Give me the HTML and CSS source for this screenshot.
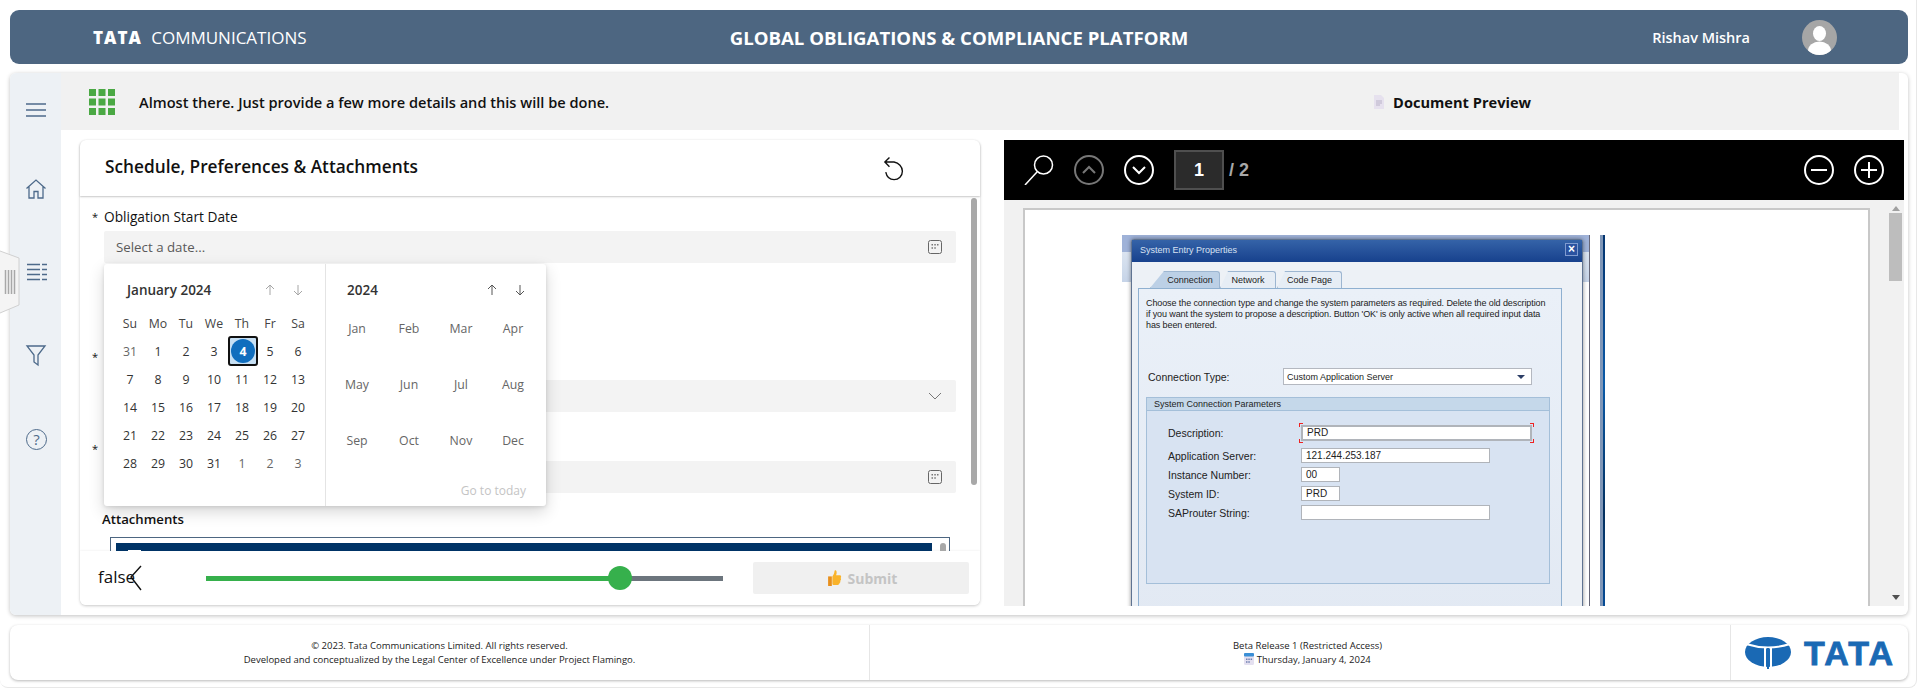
FILE: index.html
```html
<!DOCTYPE html>
<html lang="en">
<head>
    <meta charset="UTF-8">
    <title>Global Obligations &amp; Compliance Platform</title>
    <link rel="stylesheet" href="styles.css">
</head>
<body>
<div class="app">
    <header class="topbar">
        <div class="brand"><b>TATA</b> COMMUNICATIONS</div>
        <div class="app-title">GLOBAL OBLIGATIONS &amp; COMPLIANCE PLATFORM</div>
        <div class="user">
            <span>Rishav Mishra</span>
            <svg class="avatar" viewBox="0 0 35 35"><defs><clipPath id="av"><circle cx="17.5" cy="17.5" r="17.5"/></clipPath></defs><g clip-path="url(#av)"><rect width="35" height="35" fill="#a6a6a6"/><ellipse cx="17.5" cy="13.5" rx="6.5" ry="7.5" fill="#fff"/><ellipse cx="17.5" cy="31" rx="11.5" ry="9.5" fill="#fff"/></g></svg>
        </div>
    </header>

    <main class="main">
        <svg class="handle" viewBox="0 0 20 64"><path class="handle-body" d="M0 1 19 8V55L0 63"/><path class="handle-lines" d="M5.500 20v24M8.500 20v24M11.500 20v24M14.500 20v24"/></svg>
        <nav class="sidebar">
            <svg class="nav-icon menu" viewBox="0 0 24 24"><path d="M2 6h20M2 12h20M2 18h20"/></svg>
            <svg class="nav-icon home" viewBox="0 0 24 24"><path d="M2.5 11.5 12 3l9.5 8.5M5 9.5V21h5v-6.5h4V21h5V9.5"/></svg>
            <svg class="nav-icon list" viewBox="0 0 24 24"><path d="M3 4.500h13M18 4.500h5M3 9.500h13M18 9.500h5M3 14.500h13M18 14.500h5M3 19.500h13M18 19.500h5"/></svg>
            <svg class="nav-icon filter" viewBox="0 0 24 24"><path d="M3 3h18l-7 9v10l-4-3v-7z"/></svg>
            <span class="help">?</span>
        </nav>

        <div class="content">
            <div class="strip">
                <svg class="dots" viewBox="0 0 26 26"><path d="M0 0h7v7H0zM9.500 0h7v7h-7zM19 0h7v7h-7zM0 9.500h7v7H0zM9.500 9.500h7v7h-7zM19 9.500h7v7h-7zM0 19h7v7H0zM9.500 19h7v7h-7zM19 19h7v7h-7z"/></svg>
                <span class="strip-text">Almost there. Just provide a few more details and this will be done.</span>
                <div class="strip-doc">
                    <svg class="doc-icon" viewBox="0 0 12 14"><path d="M1 0h7l3 3v11H1z" fill="#e6e1ee"/><path d="M3 6h6M3 8h6M3 10h4" stroke="#b9b2c8"/></svg>
                    <span>Document Preview</span>
                </div>
            </div>

            <div class="panels">
                <section class="card">
                    <div class="card-head">
                        <h2>Schedule, Preferences &amp; Attachments</h2>
                        <svg class="reset" viewBox="0 0 26 26"><path d="M7 1 2 6l5 5M2 6h10c5 1 9 5 9 10 0 5-4 9-9 9-5 0-8-3-9-8"/></svg>
                    </div>

                    <div class="card-body">
                        <div class="form">
                            <div class="label-row first"><span class="star">*</span><label>Obligation Start Date</label></div>
                            <div class="input"><span>Select a date...</span>
                                <svg class="cal" viewBox="0 0 14 14"><rect x=".5" y=".5" width="13" height="13" rx="2"/><path class="fill" d="M3.500 4h1.500v1.500H3.500zM6.300 4h1.500v1.500H6.300zM9 4h1.500v1.500H9zM3.500 7.200h1.500v1.500H3.500zM6.300 7.200h1.500v1.500H6.300z"/></svg>
                            </div>

                            <div class="label-row second"><span class="star">*</span></div>
                            <div class="input">
                                <svg class="chev" viewBox="0 0 14 8"><path d="M1 1l6 6 6-6"/></svg>
                            </div>

                            <div class="label-row third"><span class="star">*</span></div>
                            <div class="input">
                                <svg class="cal" viewBox="0 0 14 14"><rect x=".5" y=".5" width="13" height="13" rx="2"/><path class="fill" d="M3.500 4h1.500v1.500H3.500zM6.300 4h1.500v1.500H6.300zM9 4h1.500v1.500H9zM3.500 7.200h1.500v1.500H3.500zM6.300 7.200h1.500v1.500H6.300z"/></svg>
                            </div>

                            <div class="attach-label">Attachments</div>
                            <div class="attach-box">
                                <div class="attach-bar"><i></i></div>
                                <div class="attach-thumb"></div>
                            </div>

                            <div class="picker">
                                <div class="pick-days">
                                    <div class="pick-head">
                                        <span>January 2024</span>
                                        <svg class="arrow off" viewBox="0 0 12 12"><path d="M6 11V1M2 5l4-4 4 4"/></svg>
                                        <svg class="arrow off" viewBox="0 0 12 12"><path d="M6 1v10M2 7l4 4 4-4"/></svg>
                                    </div>
                                    <div class="days">
                                        <span class="wd">Su</span><span class="wd">Mo</span><span class="wd">Tu</span><span class="wd">We</span><span class="wd">Th</span><span class="wd">Fr</span><span class="wd">Sa</span>
                                        <span class="out">31</span><span>1</span><span>2</span><span>3</span><span class="today"><b>4</b></span><span>5</span><span>6</span>
                                        <span>7</span><span>8</span><span>9</span><span>10</span><span>11</span><span>12</span><span>13</span>
                                        <span>14</span><span>15</span><span>16</span><span>17</span><span>18</span><span>19</span><span>20</span>
                                        <span>21</span><span>22</span><span>23</span><span>24</span><span>25</span><span>26</span><span>27</span>
                                        <span>28</span><span>29</span><span>30</span><span>31</span><span class="out">1</span><span class="out">2</span><span class="out">3</span>
                                    </div>
                                </div>
                                <div class="pick-months">
                                    <div class="pick-head">
                                        <span>2024</span>
                                        <svg class="arrow" viewBox="0 0 12 12"><path d="M6 11V1M2 5l4-4 4 4"/></svg>
                                        <svg class="arrow" viewBox="0 0 12 12"><path d="M6 1v10M2 7l4 4 4-4"/></svg>
                                    </div>
                                    <div class="months">
                                        <span>Jan</span><span>Feb</span><span>Mar</span><span>Apr</span>
                                        <span>May</span><span>Jun</span><span>Jul</span><span>Aug</span>
                                        <span>Sep</span><span>Oct</span><span>Nov</span><span>Dec</span>
                                    </div>
                                    <div class="go-today">Go to today</div>
                                </div>
                            </div>
                        </div>
                        <div class="form-scroll"></div>
                    </div>

                    <div class="card-foot">
                        <span class="false-text">false</span>
                        <svg class="back" viewBox="0 0 12 26"><path d="M11 1 1 12l10 13"/></svg>
                        <div class="slider"><div class="slider-fill"></div><div class="slider-thumb"></div></div>
                        <button class="submit" disabled>
                            <svg class="thumb" viewBox="0 0 14 15"><path d="M5 6c1-1 2-3 2-5 0-1 2-1 2 1 0 1 0 2-.5 3H12c1.500 0 1.500 2 .8 2.500.6.8.4 2-.4 2.500.3 1 0 1.800-.7 2.200 0 1-.7 1.800-1.700 1.800H6c-1 0-1-1-1-1z" fill="#f9b32b"/><rect x="1" y="6" width="3.500" height="9" fill="#e88f1c"/></svg>
                            Submit
                        </button>
                    </div>
                </section>

                <section class="viewer">
                    <div class="viewer-bar">
                        <svg class="search" viewBox="0 0 30 30"><circle cx="19.500" cy="10" r="9"/><path d="M13 17 1 30"/></svg>
                        <svg class="round dim" viewBox="0 0 30 30"><circle cx="15" cy="15" r="14"/><path d="M9 18l6-6 6 6"/></svg>
                        <svg class="round" viewBox="0 0 30 30"><circle cx="15" cy="15" r="14"/><path d="M9 12l6 6 6-6"/></svg>
                        <div class="page-box">1</div>
                        <span class="page-total">/ 2</span>
                        <svg class="round zoom-out" viewBox="0 0 30 30"><circle cx="15" cy="15" r="14"/><path d="M7 15h16"/></svg>
                        <svg class="round" viewBox="0 0 30 30"><circle cx="15" cy="15" r="14"/><path d="M15 7v16M7 15h16"/></svg>
                    </div>
                    <div class="viewer-body">
                        <div class="doc-wrap">
                            <div class="doc-page">
                                <div class="shot">
                                    <div class="back-window"></div>
                                    <div class="shot-edge"></div>
                                    <div class="dialog">
                                        <div class="dialog-title"><span>System Entry Properties</span><em>×</em></div>
                                        <div class="tabs"><span class="tab active">Connection</span><span class="tab">Network</span><span class="tab">Code Page</span></div>
                                        <div class="tab-panel">
                                            <p>Choose the connection type and change the system parameters as required. Delete the old description<br>if you want the system to propose a description. Button 'OK' is only active when all required input data<br>has been entered.</p>
                                            <div class="conn-row"><span>Connection Type:</span><div class="sap-select">Custom Application Server<i></i></div></div>
                                            <div class="group">
                                                <div class="group-head">System Connection Parameters</div>
                                                <div class="sap-row desc"><span>Description:</span><div class="sap-input wide marked">PRD</div></div>
                                                <div class="sap-row"><span>Application Server:</span><div class="sap-input mid">121.244.253.187</div></div>
                                                <div class="sap-row"><span>Instance Number:</span><div class="sap-input small">00</div></div>
                                                <div class="sap-row"><span>System ID:</span><div class="sap-input small">PRD</div></div>
                                                <div class="sap-row"><span>SAProuter String:</span><div class="sap-input mid"></div></div>
                                            </div>
                                        </div>
                                    </div>
                                </div>
                            </div>
                        </div>
                        <div class="doc-scroll">
                            <i class="up"></i>
                            <div class="doc-thumb"></div>
                            <i class="down"></i>
                        </div>
                    </div>
                </section>
            </div>
        </div>
    </main>

    <footer class="footer">
        <div class="foot-cell legal">
            <div>© 2023. Tata Communications Limited. All rights reserved.</div>
            <div>Developed and conceptualized by the Legal Center of Excellence under Project Flamingo.</div>
        </div>
        <div class="foot-cell release">
            <div>Beta Release 1 (Restricted Access)</div>
            <div><svg class="mini-cal" viewBox="0 0 10 12"><rect width="10" height="12" rx="1.500" fill="#e4e0f0"/><rect width="10" height="3.500" rx="1" fill="#3b8fd6"/><path d="M2 5.500h1.500v1.500H2zM4.300 5.500h1.500v1.500H4.300zM6.600 5.500h1.500v1.500H6.600zM2 8.200h1.500v1.500H2zM4.300 8.200h1.500v1.500H4.300z" fill="#6f7fb0"/></svg> Thursday, January 4, 2024</div>
        </div>
        <div class="foot-logo">
            <svg class="tata-mark" viewBox="0 0 46 32"><ellipse cx="23" cy="15" rx="23" ry="15" fill="#1a69b4"/><path d="M1 7Q23 14 45 7" fill="none" stroke="#fff" stroke-width="2"/><path d="M20 11v21M26 11v21" stroke="#fff" stroke-width="2"/><path d="M23 11v21" stroke="#1a69b4" stroke-width="2"/></svg>
            <span class="tata-word">TATA</span>
        </div>
    </footer>
</div>
</body>
</html>
```

FILE: styles.css
```css
* {
    box-sizing: border-box;
}
html, body {
    margin: 0;
    height: 689px;
    overflow: hidden;
    background: #fff;
}
body {
    font-family: "Open Sans", "Noto Sans", sans-serif;
    color: #111;
}
.app {
    width: 1917px;
    height: 688px;
    padding: 10px 8px 0 10px;
    border-right: 1px solid #e8e8e8;
    border-bottom: 1px solid #e8e8e8;
    border-bottom-right-radius: 8px;
    border-bottom-left-radius: 8px;
}

/* top bar */
.topbar {
    display: grid;
    grid-template-columns: 1fr auto 1fr;
    align-items: center;
    width: 1898px;
    height: 54px;
    background: #4d6681;
    border-radius: 9px;
    color: #fff;
}
.brand {
    padding-left: 83px;
    font-size: 17px;
    white-space: nowrap;
}
.brand b {
    font-weight: 800;
    letter-spacing: 1px;
    margin-right: 5px;
}
.app-title {
    font-size: 18.6px;
    font-weight: 700;
}
.user {
    display: flex;
    justify-content: flex-end;
    align-items: center;
    padding-right: 71px;
    font-size: 14.5px;
    font-weight: 600;
}
.avatar {
    width: 35px;
    height: 35px;
    margin-left: 52px;
}

/* main card */
.main {
    position: relative;
    display: flex;
    width: 1898px;
    height: 542px;
    margin-top: 9px;
    background: #fff;
    border-radius: 6px;
    box-shadow: 0 1px 4px rgba(0,0,0,0.25);
}
.handle {
    position: absolute;
    left: -10px;
    top: 177px;
    width: 20px;
    height: 64px;
}
.handle-body {
    fill: #f4f4f4;
    stroke: #d0d0d0;
}
.handle-lines {
    fill: none;
    stroke: #a8a8a8;
    stroke-width: 1.5;
}
.sidebar {
    width: 51px;
    flex: none;
    display: flex;
    flex-direction: column;
    align-items: center;
    padding-top: 25px;
    background: #edf1f5;
    border-radius: 6px 0 0 6px;
}
.nav-icon {
    width: 24px;
    height: 24px;
    fill: none;
    stroke: #4d6a8a;
    stroke-width: 1.3;
}
.nav-icon.menu {
    stroke-width: 1.5;
}
.nav-icon.home {
    margin-top: 55px;
}
.nav-icon.list {
    margin-top: 59px;
    stroke-width: 1.5;
}
.nav-icon.filter {
    margin-top: 59px;
}
.help {
    width: 21px;
    height: 21px;
    margin: 62px 0 0 2px;
    border: 1.3px solid #4d6a8a;
    border-radius: 50%;
    color: #4d6a8a;
    font-size: 15px;
    line-height: 18px;
    text-align: center;
}
.content {
    flex: 1;
    min-width: 0;
}

/* grey strip */
.strip {
    display: flex;
    align-items: center;
    width: 1838px;
    height: 57px;
    padding: 0 368px 0 28px;
    background: #f1f1f1;
    font-size: 14.6px;
    font-weight: 600;
}
.dots {
    width: 26px;
    height: 26px;
    fill: #4aa843;
}
.strip-text {
    margin-left: 24px;
}
.strip-doc {
    display: flex;
    align-items: center;
    margin-left: auto;
    font-weight: 700;
}
.doc-icon {
    width: 12px;
    height: 14px;
    margin-right: 8px;
}

/* two panels */
.panels {
    display: flex;
    gap: 24px;
    padding: 10px 0 0 19px;
}
.card {
    width: 900px;
    height: 465px;
    flex: none;
    display: flex;
    flex-direction: column;
    border-radius: 6px;
    box-shadow: 0 1px 3px rgba(0,0,0,0.22);
}
.card-head {
    display: flex;
    align-items: center;
    justify-content: space-between;
    height: 56px;
    flex: none;
    padding: 0 73px 0 25px;
    border-radius: 6px 6px 0 0;
    box-shadow: 0 1px 2px rgba(0,0,0,0.22);
}
.card-head h2 {
    margin: 0 0 4px;
    font-size: 17.25px;
    font-weight: 600;
}
.reset {
    width: 24px;
    height: 25px;
    fill: none;
    stroke: #111;
    stroke-width: 1.5;
}
.card-body {
    display: flex;
    flex: 1;
    min-height: 0;
}
.form {
    position: relative;
    width: 888px;
    height: 355px;
    overflow: hidden;
    padding: 10px 0 0 12px;
    font-size: 13.7px;
}
.form-scroll {
    width: 6px;
    height: 287px;
    margin: 2px 0 0 3px;
    background: #a8a8a8;
    border-radius: 3px;
}
.label-row {
    display: flex;
    align-items: center;
    height: 20px;
    font-weight: 500;
}
.label-row.first {
    margin-bottom: 5px;
}
.label-row.second {
    margin-top: 83px;
    margin-bottom: 14px;
}
.label-row.third {
    margin-top: 26px;
    margin-bottom: 3px;
}
.star {
    width: 12px;
    flex: none;
    font-size: 11px;
}
.input {
    display: flex;
    align-items: center;
    justify-content: space-between;
    width: 852px;
    height: 32px;
    margin-left: 12px;
    padding: 0 14px 0 12px;
    background: #f3f3f3;
    border-radius: 2px;
    color: #5a5a5a;
    font-size: 13.3px;
}
.cal {
    width: 14px;
    height: 14px;
    margin-left: auto;
    fill: none;
    stroke: #666;
}
.cal .fill {
    fill: #777;
    stroke: none;
}
.chev {
    width: 14px;
    height: 8px;
    margin-left: auto;
    fill: none;
    stroke: #777;
}
.attach-label {
    margin: 16px 0 0 10px;
    font-weight: 600;
    font-size: 13.2px;
    line-height: 20px;
}
.attach-box {
    display: flex;
    width: 840px;
    height: 40px;
    margin: 8px 0 0 18px;
    padding: 5px 3px 0 5px;
    border: 1px solid #4d6681;
}
.attach-bar {
    width: 818px;
    height: 30px;
    background: #003366;
    padding: 7px 0 0 12px;
}
.attach-bar i {
    display: block;
    width: 13px;
    height: 13px;
    background: #fff;
}
.attach-thumb {
    width: 6px;
    height: 12px;
    margin-left: 8px;
    background: #a8a8a8;
    border-radius: 3px;
}

/* date popup */
.picker {
    position: absolute;
    left: 24px;
    top: 68px;
    display: flex;
    width: 442px;
    height: 242px;
    background: #fff;
    border-radius: 3px;
    box-shadow: 0 6px 16px rgba(0,0,0,0.16), 0 1px 4px rgba(0,0,0,0.12);
    font-size: 12.3px;
    color: #333;
}
.pick-days {
    width: 222px;
    padding: 12px 13px 0 12px;
    border-right: 1px solid #e4e4e4;
}
.pick-months {
    flex: 1;
    padding: 12px 0 0 5px;
}
.pick-head {
    display: flex;
    align-items: center;
    height: 28px;
    padding-left: 11px;
    font-size: 13.5px;
    font-weight: 600;
}
.pick-months .pick-head {
    padding: 0 12px 0 16px;
}
.pick-head span {
    flex: 1;
}
.arrow {
    width: 28px;
    height: 12px;
    fill: none;
    stroke: #555;
    stroke-width: 1;
}
.arrow.off {
    stroke: #a6a6a6;
}
.days {
    display: grid;
    grid-template-columns: repeat(7, 28px);
    grid-auto-rows: 28px;
    margin-top: 5px;
}
.days span {
    display: flex;
    align-items: center;
    justify-content: center;
}
.days .out {
    color: #666;
}
.days .wd {
    color: #444;
}
.days .today {
    position: relative;
    margin: -1px 0 -1px 0;
    width: 30px;
    height: 30px;
    background: #c7e0f4;
    border: 2px solid #111;
    border-radius: 3px;
}
.today b {
    display: flex;
    align-items: center;
    justify-content: center;
    width: 24px;
    height: 24px;
    background: #106ebe;
    border-radius: 50%;
    color: #fff;
    font-weight: 700;
}
.months {
    display: grid;
    grid-template-columns: repeat(4, 52px);
    grid-auto-rows: 56px;
    margin-top: -3px;
    text-align: center;
    line-height: 56px;
    color: #666;
}
.go-today {
    margin-top: 12px;
    padding-right: 20px;
    text-align: right;
    line-height: 20px;
    color: #c4c4c4;
    font-size: 12px;
}

/* card footer */
.card-foot {
    display: flex;
    align-items: center;
    height: 54px;
    flex: none;
    padding: 0 11px 0 18px;
    box-shadow: 0 -1px 2px rgba(0,0,0,0.04);
    background: #fff;
    border-radius: 0 0 6px 6px;
}
.false-text {
    width: 32px;
    font-size: 17px;
    margin-top: -4px;
}
.back {
    width: 12px;
    height: 26px;
    fill: none;
    stroke: #111;
    stroke-width: 1.4;
}
.slider {
    position: relative;
    width: 517px;
    height: 5px;
    margin-left: 64px;
    background: #6c757d;
}
.slider-fill {
    width: 414px;
    height: 5px;
    background: #36b04c;
}
.slider-thumb {
    position: absolute;
    left: 402px;
    top: -9.500px;
    width: 24px;
    height: 24px;
    background: #36b04c;
    border-radius: 50%;
}
.submit {
    display: flex;
    align-items: center;
    justify-content: center;
    gap: 6px;
    width: 216px;
    height: 32px;
    margin-left: auto;
    padding-left: 8px;
    background: #f0f0f0;
    border: 0;
    border-radius: 2px;
    color: #c4c4c4;
    font: 700 14px "Open Sans", sans-serif;
}
.thumb {
    width: 15px;
    height: 16px;
}

/* pdf viewer */
.viewer {
    width: 900px;
    height: 466px;
    flex: none;
}
.viewer-bar {
    display: flex;
    align-items: center;
    height: 60px;
    padding: 0 20px;
    background: #000;
}
.search {
    width: 30px;
    height: 30px;
    fill: none;
    stroke: #fff;
    stroke-width: 1.5;
}
.round {
    width: 30px;
    height: 30px;
    margin-left: 20px;
    fill: none;
    stroke: #fff;
    stroke-width: 2;
}
.round.dim {
    stroke: #777;
}
.zoom-out {
    margin-left: auto;
}
.page-box {
    width: 50px;
    height: 40px;
    margin-left: 20px;
    background: #2b2b2b;
    border: 2px solid #4f4f4f;
    color: #fff;
    font: 700 18px/36px "Liberation Sans", sans-serif;
    text-align: center;
}
.page-total {
    margin-left: 5px;
    color: #a8a8a8;
    font: 700 18px "Liberation Sans", sans-serif;
}
.viewer-body {
    display: flex;
    height: 406px;
    background: #f1f1f1;
}
.doc-wrap {
    flex: 1;
    padding: 8px 19px 0;
    overflow: hidden;
}
.doc-page {
    height: 420px;
    padding: 25px 0 0 97px;
    background: #fff;
    border: 2px solid #c8c8c8;
}
.doc-scroll {
    display: flex;
    flex-direction: column;
    align-items: center;
    width: 15px;
    padding: 6px 2px 6px 0;
}
.doc-scroll .up {
    border: 4px solid transparent;
    border-top: 0;
    border-bottom: 5px solid #a0a0a0;
}
.doc-thumb {
    width: 13px;
    height: 68px;
    margin-top: 2px;
    background: #bdbdbd;
}
.doc-scroll .down {
    margin-top: auto;
    border: 4px solid transparent;
    border-bottom: 0;
    border-top: 5px solid #505050;
}

/* the picture inside the preview */
.shot {
    position: relative;
    width: 483px;
    height: 372px;
    overflow: hidden;
    font-family: "Liberation Sans", sans-serif;
    font-size: 9px;
    color: #222;
}
.back-window {
    position: absolute;
    left: 0;
    top: 0;
    width: 468px;
    height: 100%;
    background: linear-gradient(#9fb2d8 17px, #dbe4f0 17px, #c6d4e8 47px, #fff 47px);
    border-right: 1px solid #667;
}
.shot-edge {
    position: absolute;
    right: 0;
    top: 0;
    width: 5px;
    height: 100%;
    background: linear-gradient(#04346f, #0a5aa8 40%, #03305f 75%, #064c96);
    border-left: 3px solid #8097b8;
}
.dialog {
    position: absolute;
    left: 9px;
    top: 4px;
    width: 452px;
    height: 380px;
    background: #edf1f6;
    border: 1px solid #5f7391;
    border-radius: 3px 3px 0 0;
    box-shadow: 0 0 4px rgba(0,0,0,0.45);
}
.dialog-title {
    display: flex;
    align-items: center;
    justify-content: space-between;
    height: 22px;
    padding: 0 4px 3px 8px;
    background: linear-gradient(#3563a8, #17418d);
    color: #d8e2f2;
}
.dialog-title em {
    width: 13px;
    height: 13px;
    background: #2a52a0;
    border: 1px solid #7f9bd0;
    color: #fff;
    font: 700 12px/11px "Liberation Sans", sans-serif;
    text-align: center;
}
.tabs {
    display: flex;
    height: 26px;
    padding: 9px 0 0 18px;
}
.tab {
    padding: 3px 0 0;
    width: 56px;
    text-align: center;
    background: #e6edf5;
    border: 1px solid #9db6d1;
    border-bottom: 0;
    border-radius: 3px 3px 0 0;
    clip-path: polygon(8px 0, 100% 0, 100% 100%, 0 100%);
}
.tab.active {
    width: 70px;
    padding-left: 10px;
    background: #bcd0e6;
    clip-path: polygon(14px 0, 100% 0, 100% 100%, 0 100%);
}
.tab:last-child {
    width: 65px;
    margin-left: 1px;
}
.tab-panel {
    width: 424px;
    height: 340px;
    margin-left: 6px;
    padding: 9px 8px 0 7px;
    background: linear-gradient(#eaf0f8, #e2e9f3);
    border: 1px solid #8fb0d0;
}
.tab-panel p {
    margin: 0;
    white-space: nowrap;
    letter-spacing: -0.1px;
    line-height: 11px;
}
.conn-row {
    display: flex;
    align-items: center;
    height: 17px;
    margin: 37px 0 0 2px;
}
.conn-row span {
    width: 135px;
    font-size: 10.5px;
}
.sap-select {
    display: flex;
    justify-content: space-between;
    align-items: center;
    width: 249px;
    height: 17px;
    padding: 0 6px 0 3px;
    background: #fff;
    border: 1px solid #b4b8c0;
}
.sap-select i {
    border: 4px solid transparent;
    border-bottom: 0;
    border-top: 4px solid #2c3e66;
}
.group {
    width: 404px;
    height: 187px;
    margin-top: 12px;
    background: #d8e3f2;
    border: 1px solid #a4bfd9;
}
.group-head {
    height: 13px;
    padding-left: 7px;
    line-height: 12px;
    background: #c5d8ea;
    border-bottom: 1px solid #a4bfd9;
}
.sap-row {
    display: flex;
    align-items: center;
    height: 15px;
    margin: 4px 0 0 21px;
}
.sap-row.desc {
    height: 16px;
    margin-top: 14px;
    margin-bottom: 7px;
}
.sap-row span {
    width: 133px;
    font-size: 10.5px;
}
.sap-input {
    height: 100%;
    padding-left: 4px;
    background: #fff;
    border: 1px solid #b0b4ba;
    font-size: 10px;
    line-height: 13px;
}
.sap-input.wide {
    width: 231px;
    border-width: 2px;
    line-height: 12px;
}
.sap-input.mid {
    width: 189px;
}
.sap-input.small {
    width: 39px;
}
.marked {
    position: relative;
}
.marked::before {
    content: "";
    position: absolute;
    inset: -4px;
    background:
        linear-gradient(#e22, #e22) 0 0/4px 1px no-repeat,
        linear-gradient(#e22, #e22) 0 0/1px 4px no-repeat,
        linear-gradient(#e22, #e22) 100% 0/4px 1px no-repeat,
        linear-gradient(#e22, #e22) 100% 0/1px 4px no-repeat,
        linear-gradient(#e22, #e22) 0 100%/4px 1px no-repeat,
        linear-gradient(#e22, #e22) 0 100%/1px 4px no-repeat,
        linear-gradient(#e22, #e22) 100% 100%/4px 1px no-repeat,
        linear-gradient(#e22, #e22) 100% 100%/1px 4px no-repeat;
}

/* footer */
.footer {
    display: flex;
    width: 1898px;
    height: 55px;
    margin-top: 10px;
    background: #fff;
    border-radius: 8px;
    box-shadow: 0 1px 3px rgba(0,0,0,0.28);
    font-size: 9.500px;
    line-height: 14px;
    color: #222;
}
.foot-cell {
    display: flex;
    flex-direction: column;
    justify-content: center;
    text-align: center;
    border-right: 1px solid #e6e6e6;
}
.legal {
    width: 860px;
}
.release {
    width: 861px;
    padding-left: 15px;
}
.mini-cal {
    width: 10px;
    height: 12px;
    vertical-align: -2px;
}
.foot-logo {
    display: flex;
    align-items: center;
    flex: 1;
    padding-left: 14px;
    gap: 13px;
}
.tata-mark {
    width: 46px;
    height: 32px;
}
.tata-word {
    font: 700 34px/1 "Liberation Sans", sans-serif;
    letter-spacing: 2px;
    -webkit-text-stroke: 0.8px #1a69b4;
    color: #1a69b4;
}
```
